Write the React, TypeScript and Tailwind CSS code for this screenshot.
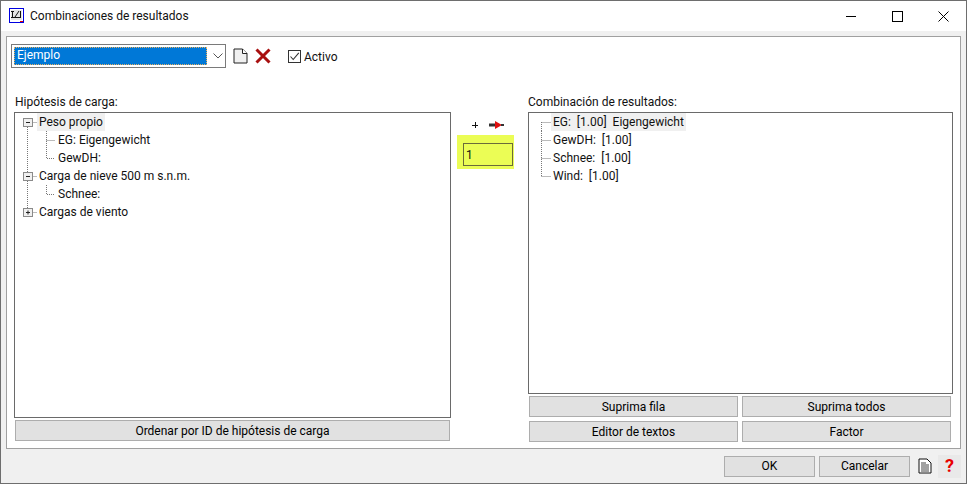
import React from "react"

const font = "font-['Roboto','Noto_Sans',sans-serif]"

const ParentGuide = ({ open, line }: { open: boolean; line: string }) => (
  <svg width="22" height="18" className="shrink-0">
    <path d={line} stroke="#777" strokeDasharray="1 1" fill="none" />
    <path d="M13.5 9.5H22" stroke="#777" strokeDasharray="1 1" fill="none" />
    <rect x="8.5" y="5.5" width="9" height="8" fill="#f0f0f0" stroke="#8a8a8a" />
    <path d={open ? "M11 9.5h4" : "M11 9.5h4M13 7.5v4"} stroke="#222" fill="none" />
  </svg>
)

const TreeParent = ({ label, line, open = true, active = false }: { label: string; line: string; open?: boolean; active?: boolean }) => (
  <div className="flex h-[18px] items-center">
    <ParentGuide open={open} line={line} />
    <span className={`flex h-[18px] items-center px-[2px] ${active ? "bg-[#f0f0f0]" : ""}`}>{label}</span>
  </div>
)

const TreeChild = ({ label, last = false }: { label: string; last?: boolean }) => (
  <div className="flex h-[18px] items-center">
    <svg width="43" height="18" className="shrink-0">
      <path d="M12.5 0V18" stroke="#777" strokeDasharray="1 1" fill="none" />
      <path d={last ? "M31.5 0V9.5H40" : "M31.5 0V18M31.5 9.5H40"} stroke="#777" strokeDasharray="1 1" fill="none" />
    </svg>
    <span>{label}</span>
  </div>
)

const ResultRow = ({ label, active = false, last = false, first = false }: { label: string; active?: boolean; last?: boolean; first?: boolean }) => (
  <div className="flex h-[18px] items-center">
    <svg width="22" height="18" className="shrink-0">
      <path d={`M12.5 ${first ? 9 : 0}V${last ? 9.5 : 18}M12.5 9.5H22`} stroke="#777" strokeDasharray="1 1" fill="none" />
    </svg>
    <span className={`flex h-[18px] items-center whitespace-pre px-[2px] ${active ? "bg-[#f0f0f0]" : ""}`}>{label}</span>
  </div>
)

const Btn = ({ label, className = "" }: { label: string; className?: string }) => (
  <button className={`flex h-[21px] items-center justify-center border border-[#adadad] bg-[#e1e1e1] text-[12px] text-black ${className}`}>
    {label}
  </button>
)

export default function App() {
  return (
    <div className={`flex h-[484px] w-[967px] flex-col overflow-hidden border border-[#6e6e6e] bg-[#f0f0f0] text-[12px] leading-none text-[#111] ${font}`}>
      {/* title bar */}
      <div className="flex h-[30px] shrink-0 items-center bg-white pl-[8px]">
        <svg width="16" height="16" viewBox="0 0 16 16" className="shrink-0">
          <rect x="0.5" y="0.5" width="14" height="14" fill="#fff" stroke="#0000e0" />
          <rect x="2" y="2" width="11" height="10" fill="#e4e4e4" />
          <path d="M2 3.5h3M3.5 3v6M2 9.5h10M11.5 3v7M6 9l4-6" stroke="#111" strokeWidth="1" fill="none" />
          <path d="M11 13.5h3" stroke="#e00000" />
        </svg>
        <span className="ml-[5px] text-[12px]">Combinaciones de resultados</span>
        <div className="ml-auto flex h-full items-center text-black">
          <div className="flex w-[46px] justify-center">
            <svg width="10" height="10"><path d="M0 5.5H10" stroke="#000" /></svg>
          </div>
          <div className="flex w-[46px] justify-center">
            <svg width="11" height="11"><rect x="0.5" y="0.5" width="10" height="10" fill="none" stroke="#000" /></svg>
          </div>
          <div className="flex w-[46px] justify-center">
            <svg width="11" height="11"><path d="M0.5 0.5L10.5 10.5M10.5 0.5L0.5 10.5" stroke="#000" /></svg>
          </div>
        </div>
      </div>

      {/* main panel */}
      <div className="mx-[5px] mt-[5px] flex h-[413px] shrink-0 flex-col border border-[#a0a0a0] bg-white px-[7px]">
        <div className="mt-[7px] flex h-[24px] items-center">
          <div className="-ml-[3px] flex h-[24px] w-[215px] items-center border border-[#7a7a7a] bg-white p-[2px]">
            <div className="flex h-[18px] w-[193px] items-center border border-dotted border-[#e8b060] bg-[#0078d7] px-[2px] pb-[2px] text-[12px] text-white">Ejemplo</div>
            <svg width="10" height="6" viewBox="0 0 10 6" className="ml-[6px] shrink-0">
              <path d="M0.5 0.5L5 5L9.5 0.5" stroke="#555" fill="none" />
            </svg>
          </div>
          <svg width="15" height="16" viewBox="0 0 15 16" className="ml-[7px] shrink-0">
            <path d="M1 1H9.5L14 5.5V15H1Z" fill="#f0f0f0" stroke="#222" />
            <path d="M9.5 1V5.5H14" fill="#fff" stroke="#222" />
          </svg>
          <svg width="16" height="16" viewBox="0 0 16 16" className="ml-[7px] shrink-0">
            <path d="M1.5 1.5L14.5 14.5M14.5 1.5L1.5 14.5" stroke="#a81010" strokeWidth="3" />
          </svg>
          <div className="ml-[17px] mt-px flex h-[13px] w-[13px] items-center justify-center border border-[#333] bg-white">
            <svg width="11" height="11" viewBox="0 0 11 11"><path d="M1.5 5.5L4.2 8.5L9.8 1.8" stroke="#333" strokeWidth="1.1" fill="none" /></svg>
          </div>
          <span className="ml-[3px] mt-[2px]">Activo</span>
        </div>

        <div className="mt-[27px] flex">
          {/* left column */}
          <div className="flex w-[437px] shrink-0 flex-col">
            <div className="ml-px h-[17px] pt-px">Hipótesis de carga:</div>
            <div className="h-[306px] border border-[#6a6a6a] bg-white">
              <TreeParent label="Peso propio" line="M12.5 14V18" active />
              <TreeChild label="EG: Eigengewicht" />
              <TreeChild label="GewDH:" last />
              <TreeParent label="Carga de nieve 500 m s.n.m." line="M12.5 0V18" />
              <TreeChild label="Schnee:" last />
              <TreeParent label="Cargas de viento" line="M12.5 0V5" open={false} />
            </div>
            <Btn label="Ordenar por ID de hipótesis de carga" className="ml-px mt-[2px] w-[435px]" />
          </div>

          {/* middle column */}
          <div className="flex w-[77px] shrink-0 flex-col">
            <div className="ml-[6px] mt-[22px] flex h-[16px] w-[57px] items-center">
              <svg width="6" height="6" viewBox="0 0 6 6" className="ml-[15px]"><path d="M0 3.5H6M3.5 0V6" stroke="#111" /></svg>
              <svg width="15" height="8" viewBox="0 0 15 8" className="ml-[11px]">
                <path d="M0 2.5h7v3H0Z" fill="#333" />
                <path d="M6 0l7 4-7 4Z" fill="#e01010" />
                <path d="M12 3h3v2h-3Z" fill="#333" />
              </svg>
            </div>
            <div className="ml-[6px] mt-[2px] h-[34px] w-[57px] bg-[#ebfd55] pl-[6px] pt-[8px]">
              <div className="flex h-[23px] w-[50px] items-center border border-[#6b6b3a] pl-[2px] text-[12px]">1</div>
            </div>
          </div>

          {/* right column */}
          <div className="flex w-[425px] shrink-0 flex-col">
            <div className="h-[17px] pt-px">Combinación de resultados:</div>
            <div className="h-[282px] border border-[#6a6a6a] bg-white">
              <ResultRow label="EG:  [1.00]  Eigengewicht" active first />
              <ResultRow label="GewDH:  [1.00]" />
              <ResultRow label="Schnee:  [1.00]" />
              <ResultRow label="Wind:  [1.00]" last />
            </div>
            <div className="mt-[2px] grid w-[423px] grid-cols-2 gap-x-[4px] gap-y-[4px] pl-px">
              <Btn label="Suprima fila" />
              <Btn label="Suprima todos" />
              <Btn label="Editor de textos" />
              <Btn label="Factor" />
            </div>
          </div>
        </div>
      </div>

      {/* footer */}
      <div className="mt-[6px] flex h-[22px] items-center justify-end pr-[5px]">
        <Btn label="OK" className="w-[91px]" />
        <Btn label="Cancelar" className="ml-[4px] w-[91px]" />
        <svg width="14" height="16" viewBox="0 0 14 16" className="ml-[8px] shrink-0">
          <path d="M1 1H9L13 5V15H1Z" fill="#fff" stroke="#111" />
          <path d="M3 5h5M3 7h8M3 9h8M3 11h8M3 13h8" stroke="#444" />
        </svg>
        <div className="ml-[6px] flex h-[23px] w-[23px] items-center justify-center bg-[#e9e9e9] text-[18px] font-bold text-[#e80000]">?</div>
      </div>
    </div>
  )
}
